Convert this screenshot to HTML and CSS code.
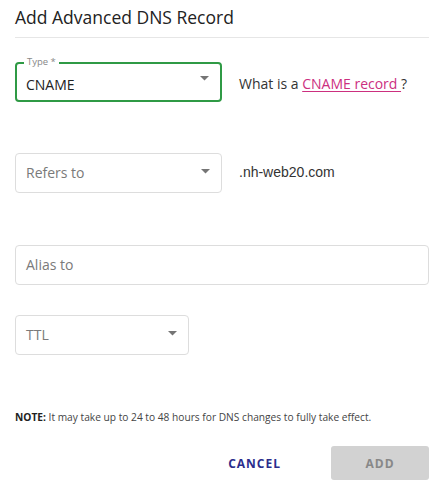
FILE: index.html
```html
<!DOCTYPE html>
<html lang="en">
<head>
<meta charset="utf-8">
<title>Add Advanced DNS Record</title>
<link rel="stylesheet" href="styles.css">
</head>
<body>
<div class="dialog">
  <h2 class="title">Add Advanced DNS Record</h2>

  <div class="row row-type">
    <div class="field field-active w-select">
      <span class="float-label">Type *</span>
      <span class="value">CNAME</span>
      <svg class="caret" width="9" height="5" viewBox="0 0 9 5"><path d="M0 0 L9 0 L4.5 4.5 Z" fill="#757575"/></svg>
    </div>
    <div class="side-text">What is a <a class="link" href="#">CNAME record </a>?</div>
  </div>

  <div class="row row-refers">
    <div class="field w-select">
      <span class="placeholder">Refers to</span>
      <svg class="caret" width="9" height="5" viewBox="0 0 9 5"><path d="M0 0 L9 0 L4.5 4.5 Z" fill="#757575"/></svg>
    </div>
    <div class="side-text domain">.nh-web20.com</div>
  </div>

  <div class="row row-alias">
    <div class="field w-full">
      <span class="placeholder">Alias to</span>
    </div>
  </div>

  <div class="row row-ttl">
    <div class="field w-ttl">
      <span class="placeholder">TTL</span>
      <svg class="caret" width="9" height="5" viewBox="0 0 9 5"><path d="M0 0 L9 0 L4.5 4.5 Z" fill="#757575"/></svg>
    </div>
  </div>

  <p class="note"><strong>NOTE:</strong> It may take up to 24 to 48 hours for DNS changes to fully take effect.</p>

  <div class="actions">
    <button class="btn btn-text">CANCEL</button>
    <button class="btn btn-disabled">ADD</button>
  </div>
</div>
</body>
</html>
```

FILE: styles.css
```css
html, body {
  margin: 0;
  padding: 0;
  background: #ffffff;
}

body {
  font-family: "Open Sans", "Liberation Sans", sans-serif;
  color: #333333;
}

.dialog {
  padding: 0 8px 0 15px;
  display: flex;
  flex-direction: column;
}

.title {
  margin: 0;
  font-size: 17.5px;
  font-weight: 400;
  line-height: 24px;
  padding-top: 5px;
  padding-bottom: 8px;
  border-bottom: 1px solid #e6e6e6;
  color: #222;
}

.row {
  display: flex;
  align-items: center;
}

.row-type { margin-top: 24px; }
.row-refers { margin-top: 51px; }
.row-alias { margin-top: 52px; }
.row-ttl { margin-top: 30px; }

.field {
  position: relative;
  box-sizing: border-box;
  height: 40px;
  border: 1px solid #dddddd;
  border-radius: 4px;
  display: flex;
  align-items: center;
  padding: 0 10px 2px;
  font-size: 14px;
}

.field-active {
  border: 2px solid #2f9a45;
  padding: 0 9px;
}

.w-select { width: 207px; }
.w-full { width: 415px; }
.w-ttl { width: 174px; }

.float-label {
  position: absolute;
  top: -8px;
  left: 7px;
  padding: 0 3px;
  background: #fff;
  font-size: 9.5px;
  line-height: 12px;
  color: #888;
}

.value {
  color: #222;
  padding-top: 5px;
}

.placeholder {
  color: #7a7a7a;
}

.caret {
  position: absolute;
  right: 11px;
  top: 50%;
  margin-top: -4px;
}

.field-active .caret {
  right: 11px;
  margin-top: -6px;
}

.side-text {
  margin-left: 17px;
  font-size: 14px;
  color: #333;
  padding-top: 3px;
}

.domain {
  font-family: "Liberation Sans", Arial, sans-serif;
  padding-top: 0;
  margin-top: -2px;
}

.link {
  color: #cc2f7f;
  text-decoration: underline;
  text-underline-offset: 2px;
}

.note {
  margin: 55px 0 0 0;
  font-size: 10.2px;
  line-height: 14px;
  color: #444;
}

.note strong {
  color: #222;
  font-weight: 700;
}

.actions {
  margin-top: 22px;
  display: flex;
  justify-content: flex-end;
  align-items: center;
  gap: 32px;
}

.btn {
  font-family: "Open Sans", "Liberation Sans", sans-serif;
  font-size: 12px;
  font-weight: 700;
  letter-spacing: 1px;
  border: none;
  height: 34px;
  border-radius: 3px;
  cursor: pointer;
}

.btn-text {
  background: transparent;
  color: #2b2d8c;
  padding: 0 18px;
}

.btn-disabled {
  background: #d2d2d2;
  color: #888888;
  width: 98px;
}
```
